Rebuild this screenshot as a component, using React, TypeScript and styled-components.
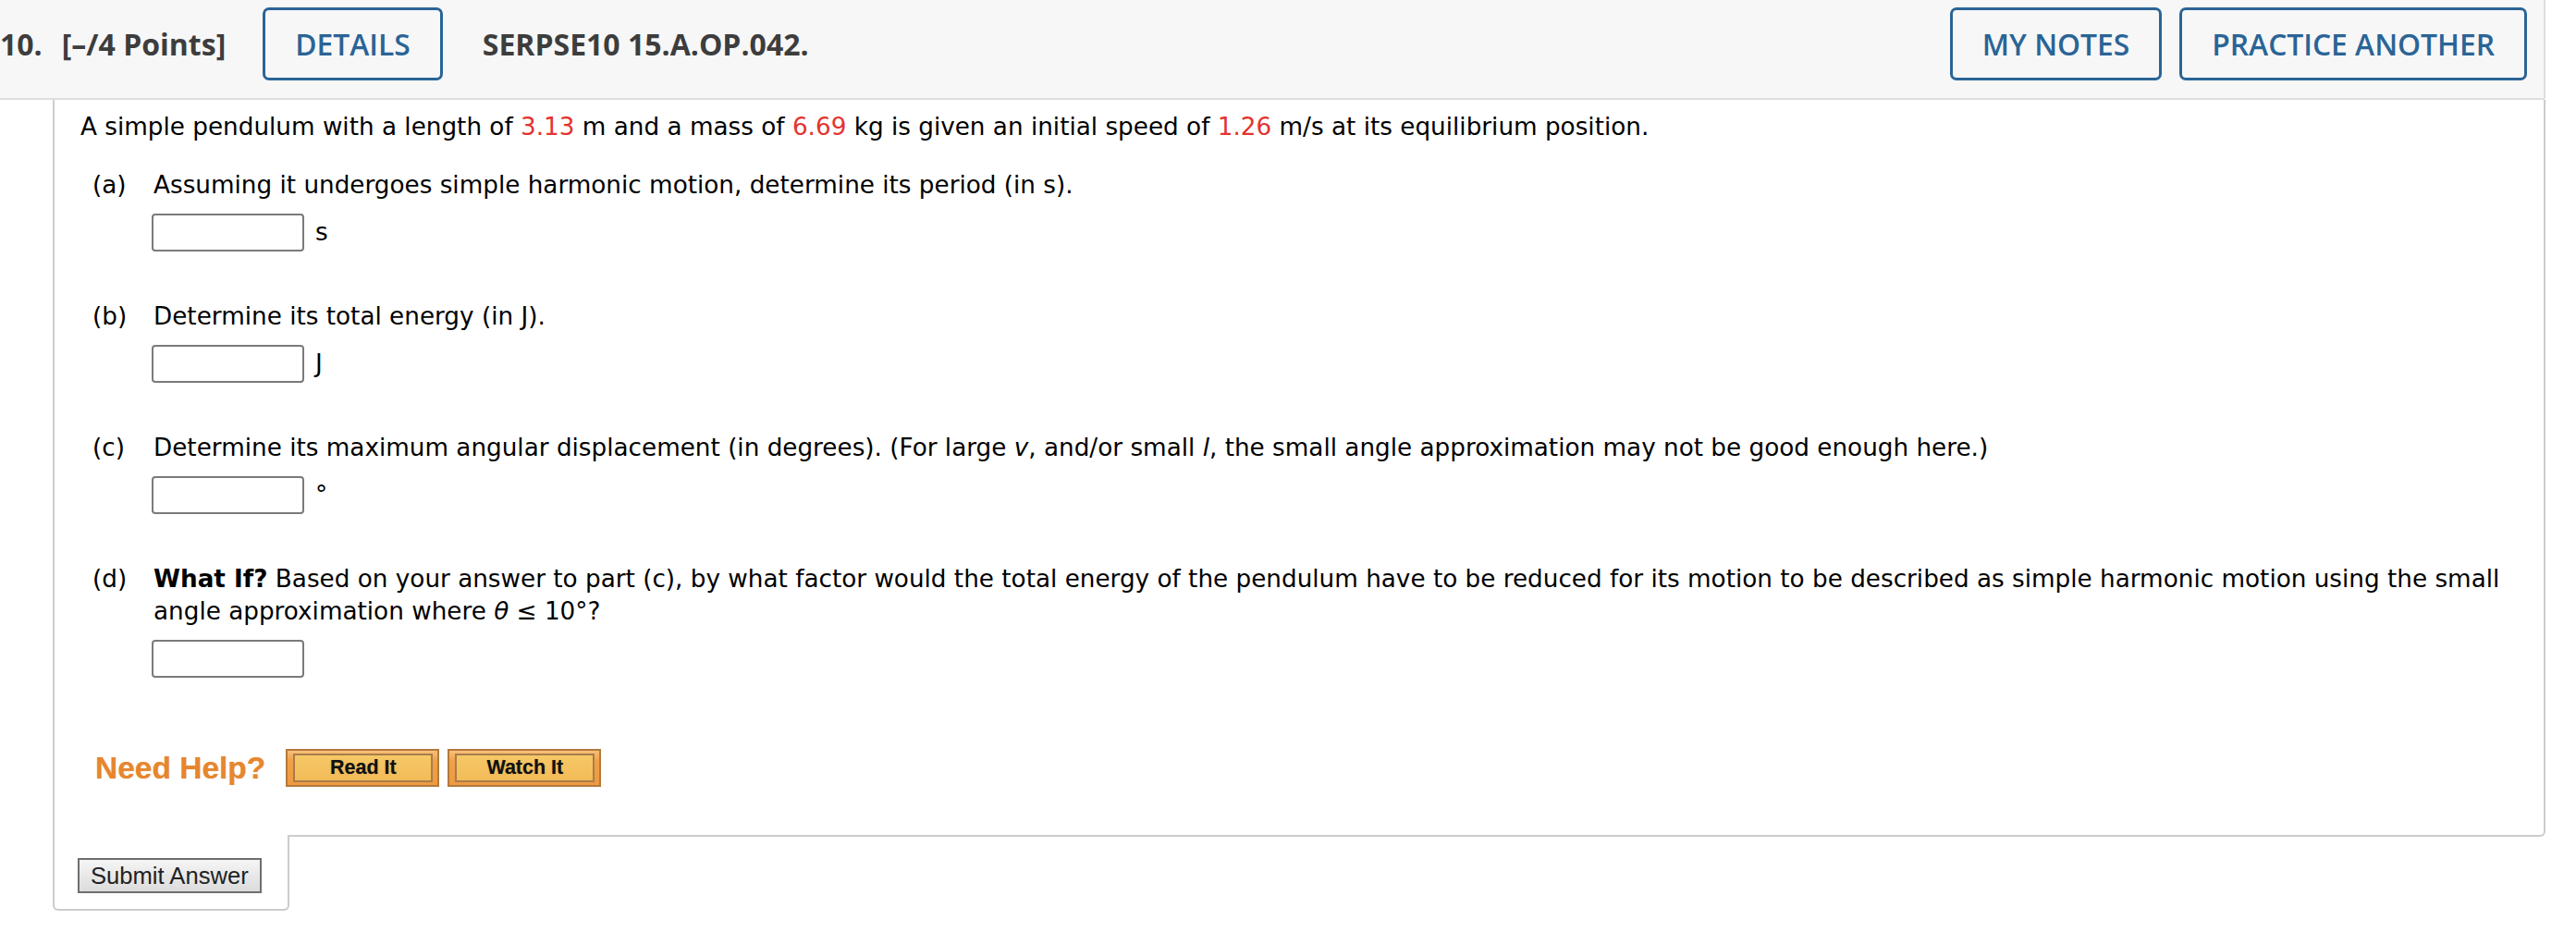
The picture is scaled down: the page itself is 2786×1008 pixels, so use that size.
import React from "react";
import styled, { createGlobalStyle } from "styled-components";

const Global = createGlobalStyle`
  html, body { margin: 0; padding: 0; background: #ffffff; }
  body { font-family: Verdana, "DejaVu Sans", sans-serif; color: #000; }
`;

const Page = styled.div`
  width: 2753px;
`;

const Header = styled.header`
  display: flex;
  align-items: center;
  box-sizing: border-box;
  width: 100%;
  height: 108px;
  padding: 8px 18px 19px 0;
  background: #f7f7f7;
  border-bottom: 2px solid #dedede;
  border-right: 2px solid #dedede;
  border-bottom-right-radius: 3px;
  font-family: "Open Sans", sans-serif;
`;

const HeaderLabel = styled.span<{ $gap?: number }>`
  font-weight: 700;
  font-size: 32px;
  color: #3d3d3d;
  white-space: nowrap;
  margin-left: ${(p) => p.$gap ?? 0}px;
`;

const HeaderButton = styled.button<{ $gap?: number }>`
  box-sizing: border-box;
  height: 79px;
  padding: 0 32px;
  margin-left: ${(p) => p.$gap ?? 0}px;
  border: 3px solid #2a6496;
  border-radius: 7px;
  background: transparent;
  color: #2a6496;
  font-family: "Open Sans", sans-serif;
  font-weight: 600;
  font-size: 31.8px;
  white-space: nowrap;
`;

const Spacer = styled.div`
  flex: 1;
`;

const Card = styled.section`
  margin-left: 57px;
`;

const Content = styled.div`
  box-sizing: border-box;
  padding: 12px 20px 52px 28px;
  border: 2px solid #cccccc;
  border-top: none;
  border-bottom-right-radius: 6px;
  font-size: 26.25px;
  line-height: 35px;
`;

const Intro = styled.p`
  margin: 0;
`;

const Value = styled.span`
  color: #e3342f;
`;

const Part = styled.div<{ $first?: boolean }>`
  display: grid;
  grid-template-columns: 66px 1fr;
  padding-left: 13px;
  margin-top: ${(p) => (p.$first ? 28 : 53)}px;
`;

const PartLabel = styled.span``;

const PartBody = styled.div``;

const Question = styled.div``;

const Strong = styled.b`
  font-weight: 700;
`;

const AnswerRow = styled.div`
  display: flex;
  align-items: center;
  gap: 12px;
  height: 41px;
  margin-top: 13px;
  margin-left: -2px;
  line-height: 1;
`;

const AnswerInput = styled.input`
  box-sizing: border-box;
  width: 165px;
  height: 41px;
  margin: 0;
  border: 2px solid #7a7a7a;
  border-radius: 4px;
  background: #fff;
  outline: none;
`;

const Unit = styled.span`
  font-size: 26.25px;
`;

const HelpRow = styled.div`
  display: flex;
  align-items: center;
  margin-top: 77px;
  padding-left: 16px;
`;

const NeedHelp = styled.span`
  font-family: "Liberation Sans", Arial, sans-serif;
  font-weight: 700;
  font-size: 33.5px;
  line-height: 41px;
  color: #e6862e;
  text-shadow: 0 0 1px rgba(230, 134, 46, 0.6);
  margin-right: 22px;
`;

const HelpButton = styled.button<{ $gap?: number }>`
  box-sizing: border-box;
  width: 166px;
  height: 41px;
  margin-left: ${(p) => p.$gap ?? 0}px;
  padding: 3px 5px 3px 6px;
  border: 2px solid #b27a3c;
  background: linear-gradient(#f8c07a 0%, #f0a048 30%, #ee9a40 100%);
  display: flex;
`;

const HelpInner = styled.span`
  flex: 1;
  display: flex;
  align-items: center;
  justify-content: center;
  border: 2px solid #a97d4c;
  background: linear-gradient(#f6c866, #f2bb58);
  font-family: "Liberation Sans", Arial, sans-serif;
  font-weight: 700;
  font-size: 21.5px;
  color: #111;
  text-shadow: 0 0 1px rgba(0, 0, 0, 0.35);
`;

const SubmitTab = styled.div`
  box-sizing: border-box;
  width: 256px;
  margin-top: -2px;
  padding: 25px 0 17px 25px;
  background: #fff;
  border: 2px solid #cccccc;
  border-top: none;
  border-bottom-left-radius: 6px;
  border-bottom-right-radius: 6px;
`;

const SubmitButton = styled.button`
  box-sizing: border-box;
  height: 38px;
  padding: 0 12px;
  border: 2px solid #6e6e6e;
  border-radius: 0;
  background: linear-gradient(#f5f5f5, #dcdcdc);
  font-family: "Liberation Sans", Arial, sans-serif;
  font-size: 25.6px;
  color: #222;
  white-space: nowrap;
`;

export default function App() {
  return (
    <Page>
      <Global />
      <Header>
        <HeaderLabel>10.</HeaderLabel>
        <HeaderLabel $gap={21}>[–/4 Points]</HeaderLabel>
        <HeaderButton $gap={40}>DETAILS</HeaderButton>
        <HeaderLabel $gap={43}>SERPSE10 15.A.OP.042.</HeaderLabel>
        <Spacer />
        <HeaderButton>MY NOTES</HeaderButton>
        <HeaderButton $gap={19}>PRACTICE ANOTHER</HeaderButton>
      </Header>
      <Card>
        <Content>
          <Intro>
            A simple pendulum with a length of <Value>3.13</Value> m and a mass of{" "}
            <Value>6.69</Value> kg is given an initial speed of <Value>1.26</Value> m/s at its
            equilibrium position.
          </Intro>

          <Part $first>
            <PartLabel>(a)</PartLabel>
            <PartBody>
              <Question>Assuming it undergoes simple harmonic motion, determine its period (in s).</Question>
              <AnswerRow>
                <AnswerInput />
                <Unit>s</Unit>
              </AnswerRow>
            </PartBody>
          </Part>

          <Part>
            <PartLabel>(b)</PartLabel>
            <PartBody>
              <Question>Determine its total energy (in J).</Question>
              <AnswerRow>
                <AnswerInput />
                <Unit>J</Unit>
              </AnswerRow>
            </PartBody>
          </Part>

          <Part>
            <PartLabel>(c)</PartLabel>
            <PartBody>
              <Question>
                Determine its maximum angular displacement (in degrees). (For large <i>v</i>, and/or
                small <i>l</i>, the small angle approximation may not be good enough here.)
              </Question>
              <AnswerRow>
                <AnswerInput />
                <Unit>°</Unit>
              </AnswerRow>
            </PartBody>
          </Part>

          <Part>
            <PartLabel>(d)</PartLabel>
            <PartBody>
              <Question>
                <Strong>What If?</Strong> Based on your answer to part (c), by what factor would the
                total energy of the pendulum have to be reduced for its motion to be described as
                simple harmonic motion using the small angle approximation where <i>θ</i> ≤ 10°?
              </Question>
              <AnswerRow>
                <AnswerInput />
              </AnswerRow>
            </PartBody>
          </Part>

          <HelpRow>
            <NeedHelp>Need Help?</NeedHelp>
            <HelpButton>
              <HelpInner>Read It</HelpInner>
            </HelpButton>
            <HelpButton $gap={9}>
              <HelpInner>Watch It</HelpInner>
            </HelpButton>
          </HelpRow>
        </Content>
        <SubmitTab>
          <SubmitButton>Submit Answer</SubmitButton>
        </SubmitTab>
      </Card>
    </Page>
  );
}
